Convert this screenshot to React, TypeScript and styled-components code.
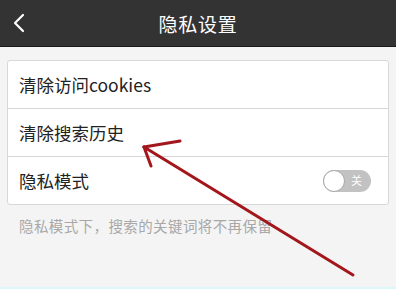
import React from "react";
import styled, { createGlobalStyle } from "styled-components";

const Global = createGlobalStyle`
  html, body { margin: 0; padding: 0; }
  body { font-family: "Noto Sans CJK SC", "Noto Sans", sans-serif; background: #f4f4f4; }
`;

const Page = styled.div`
  position: relative;
  width: 396px;
  height: 289px;
  display: flex;
  flex-direction: column;
  background: #f4f4f4;
  overflow: hidden;
`;

const Header = styled.div`
  height: 46px;
  background: #333333;
  border-bottom: 1px solid #1a1a1a;
  display: flex;
  align-items: center;
  justify-content: center;
  position: relative;
  flex-shrink: 0;
`;

const Back = styled.div`
  position: absolute;
  left: 12px;
  top: 13px;
  width: 16px;
  height: 20px;
  display: flex;
`;

const Title = styled.div`
  color: #ffffff;
  font-size: 19px;
  letter-spacing: 0.8px;
  line-height: 1;
`;

const Content = styled.div`
  flex: 1;
  padding: 13px 7px 0 7px;
  display: flex;
  flex-direction: column;
`;

const Card = styled.div`
  background: #ffffff;
  border: 1px solid #d8d8d8;
  border-radius: 3px;
  display: flex;
  flex-direction: column;
`;

const Row = styled.div<{ $last?: boolean }>`
  height: 47px;
  display: flex;
  align-items: center;
  justify-content: space-between;
  padding: 0 17px 0 11px;
  border-bottom: ${(p) => (p.$last ? "none" : "1px solid #d6d6d6")};
  color: #222222;
  font-size: 17.5px;
  line-height: 1;
`;

const Toggle = styled.div`
  width: 48px;
  height: 22px;
  border-radius: 11px;
  background: #c2c2c2;
  position: relative;
  display: flex;
  align-items: center;
  justify-content: flex-end;
  padding-right: 9px;
  box-sizing: border-box;
  color: #ffffff;
  font-size: 11px;
`;

const Knob = styled.div`
  position: absolute;
  left: 0;
  top: 0;
  width: 22px;
  height: 22px;
  border-radius: 50%;
  background: #ffffff;
  border: 1px solid #a9a9a9;
  box-sizing: border-box;
`;

const Hint = styled.div`
  margin-top: 10px;
  padding-left: 12px;
  color: #a8a8a8;
  font-size: 14.5px;
  letter-spacing: 0.4px;
`;

const Strip = styled.div`
  height: 2px;
  background: #dcf7fb;
  flex-shrink: 0;
`;

const Overlay = styled.svg`
  position: absolute;
  left: 0;
  top: 0;
  pointer-events: none;
`;

export default function App() {
  return (
    <>
      <Global />
      <Page>
        <Header>
          <Back>
            <svg width="16" height="20" viewBox="0 0 16 20">
              <path d="M11 2 L3 10 L11 18" stroke="#ffffff" strokeWidth="2.2" fill="none" strokeLinecap="round" strokeLinejoin="round" />
            </svg>
          </Back>
          <Title>隐私设置</Title>
        </Header>
        <Content>
          <Card>
            <Row>清除访问cookies</Row>
            <Row>清除搜索历史</Row>
            <Row $last>
              隐私模式
              <Toggle>
                <Knob />
                关
              </Toggle>
            </Row>
          </Card>
          <Hint>隐私模式下，搜索的关键词将不再保留</Hint>
        </Content>
        <Strip />
        <Overlay width="396" height="289" viewBox="0 0 396 289">
          <g stroke="#a3161b" strokeWidth="3" strokeLinecap="round" fill="none">
            <line x1="353" y1="275" x2="144" y2="147" />
            <line x1="144" y1="147" x2="180" y2="141" />
            <line x1="144" y1="147" x2="151" y2="166" />
          </g>
        </Overlay>
      </Page>
    </>
  );
}
